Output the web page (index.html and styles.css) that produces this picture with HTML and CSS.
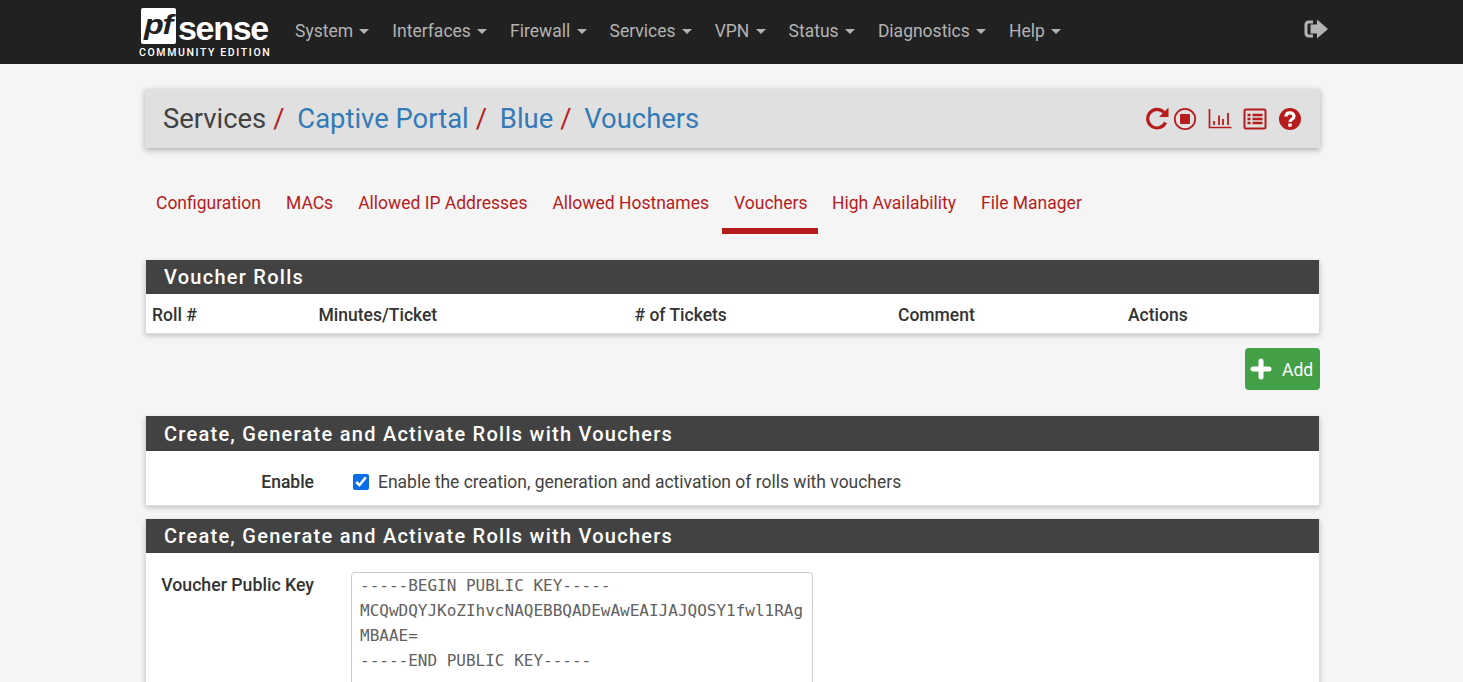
FILE: index.html
```html
<!DOCTYPE html>
<html lang="en">
<head>
<meta charset="utf-8">
<title>Vouchers</title>
<link rel="stylesheet" href="styles.css">
</head>
<body>
<header class="navbar">
  <div class="brand">
    <div class="logo"><span class="logo-pf"><span class="logo-pf-text">pf</span></span><span class="logo-sense">sense</span></div>
    <div class="logo-sub">COMMUNITY EDITION</div>
  </div>
  <nav class="menu">
    <a>System<i class="caret"></i></a>
    <a>Interfaces<i class="caret"></i></a>
    <a>Firewall<i class="caret"></i></a>
    <a>Services<i class="caret"></i></a>
    <a>VPN<i class="caret"></i></a>
    <a>Status<i class="caret"></i></a>
    <a>Diagnostics<i class="caret"></i></a>
    <a>Help<i class="caret"></i></a>
  </nav>
  <svg class="logout" viewBox="0 0 24 20" width="24" height="20"><path fill="#b3b3b3" d="M9 1.500H4.500C2 1.500 .5 3.200 .5 5.500v9c0 2.300 1.500 4 4 4H9v-3H5c-.9 0-1.500-.6-1.500-1.500V6c0-.9.6-1.500 1.500-1.500H9z"/><path fill="#b3b3b3" d="M13 .5 24 10 13 19.500V14.500H6.500v-9H13z"/></svg>
</header>
<main class="container">
  <div class="crumbs">
    <h1 class="crumb-title">
      <span>Services</span><b class="sep">/</b>
      <a>Captive Portal</a><b class="sep">/</b>
      <a>Blue</a><b class="sep">/</b>
      <a>Vouchers</a>
    </h1>
    <div class="crumb-icons">
      <svg viewBox="0 0 24 24" width="24" height="24" class="ic-reload"><path fill="none" stroke="#b71c1c" stroke-width="3.200" d="M19.500 16.500A9.300 9.300 0 1 1 18 6.500"/><path fill="#b71c1c" d="M22.500 1.500v9.500H13z"/></svg>
      <svg viewBox="0 0 24 24" width="24" height="24"><circle cx="12" cy="12" r="10.200" fill="none" stroke="#b71c1c" stroke-width="1.800"/><rect x="7" y="7" width="10" height="10" rx="1" fill="#b71c1c"/></svg>
      <svg viewBox="0 0 24 24" width="24" height="24" class="ic-gap"><path fill="none" stroke="#b71c1c" stroke-width="1.700" d="M1.500 2v18.500h22"/><path fill="none" stroke="#b71c1c" stroke-width="1.800" d="M6 18v-4M11 18V8.500M15 18v-6M20 18V6"/></svg>
      <svg viewBox="0 0 24 24" width="24" height="24" class="ic-gap"><rect x="1.500" y="2.500" width="21" height="19" rx="1.500" fill="none" stroke="#b71c1c" stroke-width="2"/><path fill="none" stroke="#b71c1c" stroke-width="2.400" d="M4.500 8h3M9.500 8h10M4.500 12h3M9.500 12h10M4.500 16h3M9.500 16h10"/></svg>
      <svg viewBox="0 0 24 24" width="24" height="24" class="ic-gap"><circle cx="12" cy="12" r="11" fill="#b71c1c"/><path fill="none" stroke="#fff" stroke-width="3.200" d="M8 9.500c0-2.500 1.800-3.700 4-3.700s4 1.300 4 3.400c0 3.300-4 2.800-4 5.800"/><rect x="10.300" y="16.500" width="3.400" height="3.200" fill="#fff"/></svg>
    </div>
  </div>
  <ul class="tabs">
    <li>Configuration</li>
    <li>MACs</li>
    <li>Allowed IP Addresses</li>
    <li>Allowed Hostnames</li>
    <li class="active">Vouchers</li>
    <li>High Availability</li>
    <li>File Manager</li>
  </ul>
  <section class="panel panel-rolls">
    <h2 class="panel-head">Voucher Rolls</h2>
    <div class="roll-row">
      <span class="c1">Roll #</span>
      <span class="c2">Minutes/Ticket</span>
      <span class="c3"># of Tickets</span>
      <span class="c4">Comment</span>
      <span class="c5">Actions</span>
    </div>
  </section>
  <div class="btn-row">
    <button class="btn-add"><svg viewBox="0 0 22 22" width="22" height="22"><path fill="none" stroke="#fff" stroke-width="5" stroke-linecap="round" d="M11 3v16M3 11h16"/></svg><span class="btn-label">Add</span></button>
  </div>
  <section class="panel panel-enable">
    <h2 class="panel-head head-tall">Create, Generate and Activate Rolls with Vouchers</h2>
    <div class="form-row row-enable">
      <label class="form-label">Enable</label>
      <label class="check"><input type="checkbox" checked>Enable the creation, generation and activation of rolls with vouchers</label>
    </div>
  </section>
  <section class="panel">
    <h2 class="panel-head">Create, Generate and Activate Rolls with Vouchers</h2>
    <div class="form-row row-key">
      <label class="form-label">Voucher Public Key</label>
      <textarea class="key" rows="8" spellcheck="false">-----BEGIN PUBLIC KEY-----
MCQwDQYJKoZIhvcNAQEBBQADEwAwEAIJAJQOSY1fwl1RAgMBAAE=
-----END PUBLIC KEY-----</textarea>
    </div>
  </section>
</main>
</body>
</html>
```
FILE: styles.css
```css
* { box-sizing: border-box; }
html, body { height: 682px; overflow: hidden; }
body { margin: 0; background: #f5f5f5; color: #333; font-family: Roboto, "Liberation Sans", sans-serif; font-size: 17.500px; }
.navbar { height: 64px; background: #212121; display: flex; align-items: center; padding-left: 139px; padding-right: 135px; }
.brand { width: 144px; padding-top: 2px; flex: none; }
.logo { display: flex; align-items: flex-start; height: 36px; }
.logo-pf { width: 35px; height: 36px; flex: none; margin-left: 2px; background: #fff; border-radius: 2px; color: #212121; font: italic bold 28px/33px "Liberation Sans", sans-serif; padding-left: 3px; }
.logo-pf-text { display: inline-block; transform: scaleX(1.150); transform-origin: left center; letter-spacing: -1px; }
.logo-sense { color: #fff; font: bold 34px/30px "Liberation Sans", sans-serif; margin: 5px 0 0 2px; letter-spacing: -1.300px; }
.logo-sub { color: #fff; font: 500 10.500px/12px Roboto, sans-serif; letter-spacing: 1.620px; margin-top: 3px; white-space: nowrap; }
.menu { display: flex; gap: 22.950px; margin-left: 12px; flex: 1; }
.menu a { color: #b3b3b3; font-size: 17.500px; line-height: 22px; display: flex; align-items: center; margin-top: -2px; }
.caret { width: 0; height: 0; border-left: 5px solid transparent; border-right: 5px solid transparent; border-top: 5px solid #b3b3b3; margin-left: 6.300px; }
.logout { margin-top: -7px; flex: none; }
.container { width: 1175px; margin: 0 auto; padding-top: 25px; transform: translateX(1px); }
.crumbs { height: 59px; background: #e0e0e0; box-shadow: 0 2px 6px rgba(0,0,0,.3); display: flex; align-items: center; justify-content: space-between; padding: 0 18px; }
.crumb-title { margin: 0; font-size: 27.400px; font-weight: 400; color: #424242; display: flex; align-items: center; line-height: 34px; }
.crumb-title a { color: #337ab7; }
.sep { color: #b71c1c; font-weight: 400; margin: 0 12.800px 0 7px; }
.crumb-icons { display: flex; align-items: center; gap: 3px; }
.crumb-icons .ic-gap { margin-left: 8px; }
.ic-reload { margin-top: -1px; }
.tabs { list-style: none; margin: 26px 0 0 -1px; padding: 0; display: flex; gap: 1px; height: 60px; }
.tabs li { color: #b71c1c; font-size: 17.500px; line-height: 22px; padding: 18px 12px 0; height: 60px; }
.tabs li.active { border-bottom: 6px solid #b71c1c; padding-right: 11px; margin-right: .5px; }
.panel { background: #fff; box-shadow: 0 2px 5px rgba(0,0,0,.2); border: 1px solid #ddd; border-top: 0; }
.panel-rolls { margin-top: 26px; }
.panel-head { margin: 0; background: #424242; color: #fff; font-size: 20px; font-weight: 500; letter-spacing: 1.260px; height: 34px; line-height: 35px; padding-left: 18px; }
.head-tall { height: 35px; line-height: 37px; }
.roll-row { height: 39px; display: flex; align-items: center; font-weight: 500; font-size: 17.500px; color: #333; padding-top: 2px; }
.c1 { width: 172.500px; padding-left: 6px; }
.c2 { width: 316px; }
.c3 { width: 263.500px; }
.c4 { width: 230px; }
.btn-row { display: flex; justify-content: flex-end; height: 42px; margin-top: 14px; }
.btn-add { width: 75px; height: 42px; background: #43a047; border: 0; border-radius: 4px; color: #fff; font: 17.500px Roboto, sans-serif; display: flex; align-items: center; gap: 10px; padding: 0 0 0 5px; }
.btn-label { padding-top: 2px; }
.panel-enable { margin-top: 26px; margin-bottom: 13px; }
.form-row { display: flex; }
.row-enable { height: 54px; align-items: center; padding-top: 7px; }
.form-label { width: 168px; text-align: right; font-weight: 500; font-size: 17.500px; color: #333; flex: none; }
.check { margin-left: 39px; display: flex; align-items: center; font-size: 17.480px; color: #424242; }
.check input { width: 16px; height: 16px; margin: 0 9px 0 0; accent-color: #0b6ee8; }
.row-key { padding-top: 19px; align-items: flex-start; }
.row-key .form-label { margin-top: 3px; font-size: 17.700px; }
.key { margin-left: 37px; width: 462px; height: 200px; border: 1px solid #ccc; border-radius: 4px; padding: 0 8px; font: 16px/25px "DejaVu Sans Mono", monospace; color: #616161; background: #fff; resize: none; overflow: hidden; white-space: pre-wrap; word-break: break-all; }
```
